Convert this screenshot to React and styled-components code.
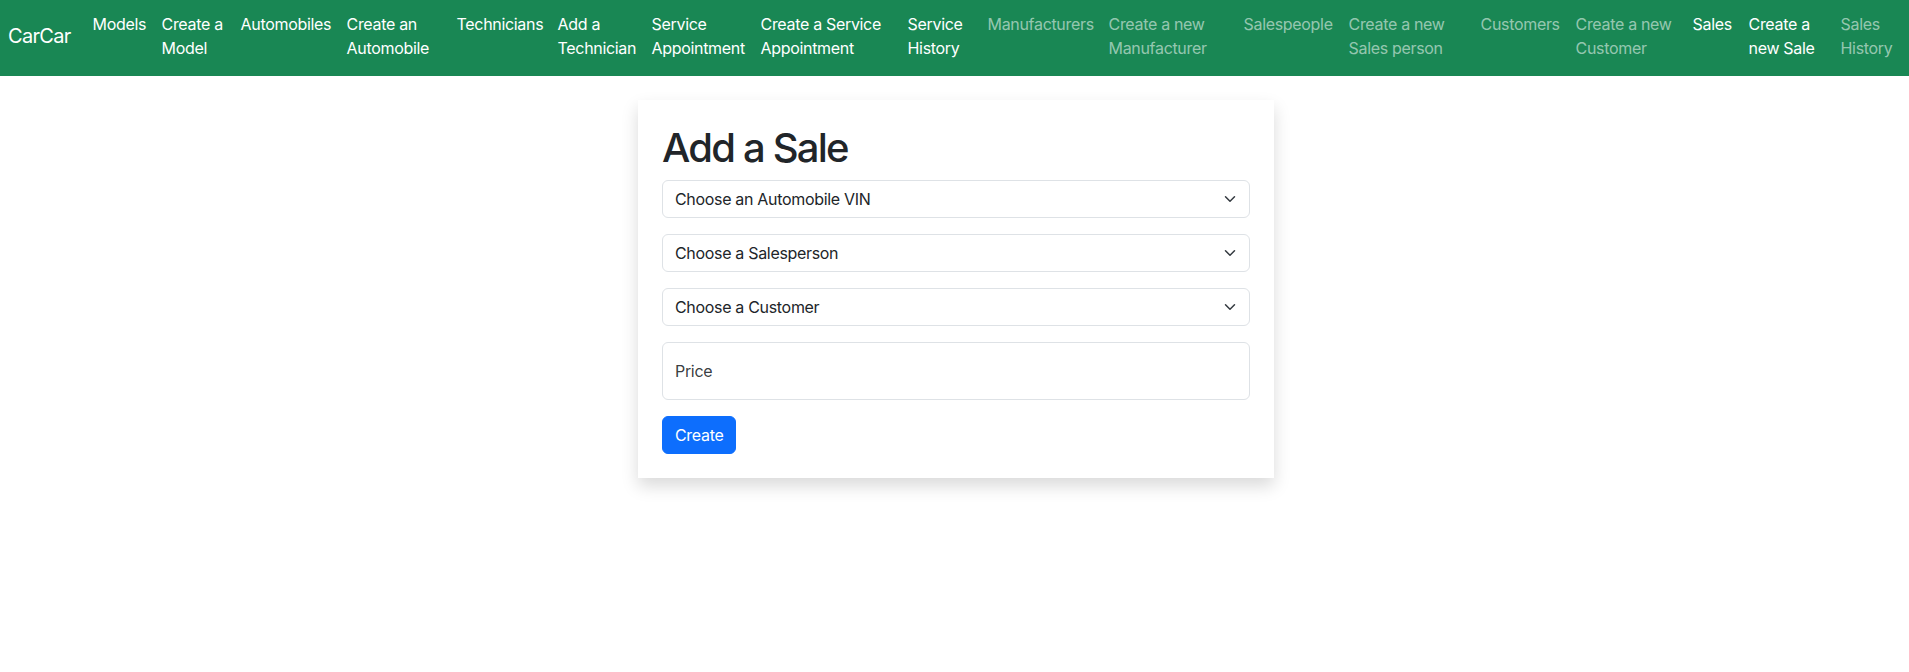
import React from 'react';
import styled, { createGlobalStyle } from 'styled-components';

const GlobalStyle = createGlobalStyle`
  *, *::before, *::after {
    box-sizing: border-box;
  }
  body {
    margin: 0;
    font-family: Inter, "Noto Sans", "Liberation Sans", sans-serif;
    font-size: 16px;
    line-height: 1.5;
    letter-spacing: -0.02em;
    color: #212529;
    background: #fff;
  }
  #root {
    min-height: 100vh;
  }
`;

const Navbar = styled.nav`
  display: flex;
  align-items: center;
  height: 76px;
  padding: 0 8px 4px;
  background-color: #198754;
`;
const Brand = styled.a`
  flex: none;
  margin-right: 14px;
  padding: 5px 0;
  font-size: 20px;
  line-height: 30px;
  letter-spacing: -0.035em;
  color: #fff;
  text-decoration: none;
  white-space: nowrap;
`;
const NavList = styled.ul`
  display: flex;
  flex: 1 1 auto;
  min-width: 0;
  margin: 0;
  padding: 0;
  list-style: none;
`;
const NavItem = styled.li`
  flex: none;
  width: ${({ $w }) => $w}px;
`;
const NavLink = styled.a`
  display: block;
  padding: 8px;
  color: ${({ $active }) => ($active ? '#fff' : 'rgba(255,255,255,.55)')};
  text-decoration: none;
`;

const Main = styled.main`
  display: flex;
  justify-content: center;
  padding: 24px 12px 40px 15px;
`;
const Card = styled.div`
  width: 636px;
  padding: 24px;
  background: #fff;
  box-shadow: 0 8px 16px rgba(0,0,0,.15);
`;
const Title = styled.h1`
  margin: 0 0 8px;
  font-size: 40px;
  font-weight: 500;
  line-height: 1.2;
  letter-spacing: -0.045em;
`;
const FormGroup = styled.div`
  position: relative;
  margin-bottom: 16px;
`;
const Select = styled.select`
  display: block;
  width: 100%;
  height: 38px;
  padding: 6px 36px 6px 12px;
  font: inherit;
  font-size: 16px;
  line-height: 24px;
  letter-spacing: -0.02em;
  color: #212529;
  background: #fff;
  border: 1px solid #dee2e6;
  border-radius: 6px;
  appearance: none;
  outline: none;
`;
const Chevron = styled.svg`
  position: absolute;
  top: 13px;
  right: 12px;
  width: 16px;
  height: 12px;
  pointer-events: none;
`;
const Input = styled.input`
  display: block;
  width: 100%;
  height: 58px;
  padding: 16px 12px;
  font: inherit;
  color: #212529;
  border: 1px solid #dee2e6;
  border-radius: 6px;
  outline: none;
  &::placeholder {
    color: transparent;
  }
`;
const FloatLabel = styled.label`
  position: absolute;
  top: 0;
  left: 0;
  padding: 17px 13px;
  line-height: 24px;
  color: rgba(33,37,41,.9);
  pointer-events: none;
`;
const Button = styled.button`
  display: inline-block;
  padding: 6px 12px;
  font: inherit;
  line-height: 24px;
  letter-spacing: -0.02em;
  color: #fff;
  background-color: #0d6efd;
  border: 1px solid #0d6efd;
  border-radius: 6px;
  cursor: pointer;
`;

// text, active, measured item width
const links = [
  ['Models', true, 69],
  ['Create a Model', true, 79],
  ['Automobiles', true, 106],
  ['Create an Automobile', true, 110],
  ['Technicians', true, 101],
  ['Add a Technician', true, 94],
  ['Service Appointment', true, 109],
  ['Create a Service Appointment', true, 147],
  ['Service History', true, 80],
  ['Manufacturers', false, 121],
  ['Create a new Manufacturer', false, 135],
  ['Salespeople', false, 105],
  ['Create a new Sales person', false, 132],
  ['Customers', false, 95],
  ['Create a new Customer', false, 117],
  ['Sales', true, 56],
  ['Create a new Sale', true, 92],
  ['Sales History', false, 67],
];

const SelectField = ({ label }) => (
  <FormGroup>
    <Select defaultValue="">
      <option value="">{label}</option>
    </Select>
    <Chevron viewBox="0 0 16 16">
      <path fill="none" stroke="#343a40" strokeLinecap="round" strokeLinejoin="round" strokeWidth="2" d="m2 5 6 6 6-6" />
    </Chevron>
  </FormGroup>
);

const App = () => (
  <>
    <GlobalStyle />
    <Navbar>
      <Brand href="#">CarCar</Brand>
      <NavList>
        {links.map(([text, active, w]) => (
          <NavItem key={text} $w={w}>
            <NavLink href="#" $active={active}>{text}</NavLink>
          </NavItem>
        ))}
      </NavList>
    </Navbar>
    <Main>
      <Card>
        <Title>Add a Sale</Title>
        <form onSubmit={e => e.preventDefault ()}>
          <SelectField label="Choose an Automobile VIN" />
          <SelectField label="Choose a Salesperson" />
          <SelectField label="Choose a Customer" />
          <FormGroup>
            <Input id="price" type="number" placeholder="Price" />
            <FloatLabel htmlFor="price">Price</FloatLabel>
          </FormGroup>
          <Button type="submit">Create</Button>
        </form>
      </Card>
    </Main>
  </>
);

export default App;
